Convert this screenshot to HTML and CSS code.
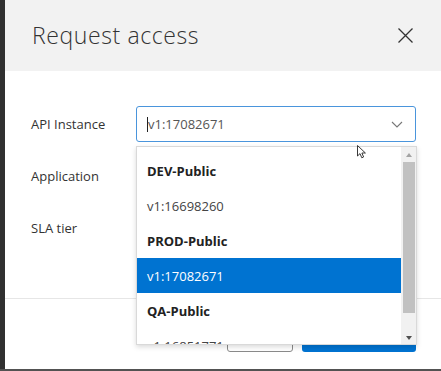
FILE: index.html
```html
<!DOCTYPE html>
<html lang="en">
<head>
<meta charset="utf-8">
<title>Request access</title>
<link rel="stylesheet" href="styles.css">
</head>
<body>
<div class="screen">
  <div class="dialog">
    <header class="dlg-head">
      <h1 class="dlg-title">Request access</h1>
      <button class="close" aria-label="Close">
        <svg width="15" height="15" viewBox="0 0 15 15"><path d="M0.5 0.5 L14.5 14.5 M14.5 0.5 L0.5 14.5" stroke="#333" stroke-width="1.3" fill="none"/></svg>
      </button>
    </header>
    <div class="dlg-body">
      <div class="row">
        <label class="label">API Instance</label>
        <div class="field-wrap">
          <div class="field select focused">
            <span class="text-cursor"></span>
            <span class="value">v1:17082671</span>
            <svg class="chevron" width="12" height="7" viewBox="0 0 12 7"><path d="M1 1 L6 6 L11 1" stroke="#777" stroke-width="1.1" fill="none"/></svg>
          </div>
          <div class="dropdown">
            <ul class="options">
              <li class="group">DEV-Public</li>
              <li class="opt">v1:16698260</li>
              <li class="group">PROD-Public</li>
              <li class="opt selected">v1:17082671</li>
              <li class="group">QA-Public</li>
              <li class="opt">v1:16851771</li>
            </ul>
            <div class="scrollbar">
              <span class="arrow up"></span>
              <span class="thumb"></span>
              <span class="arrow down"></span>
            </div>
          </div>
        </div>
      </div>
      <div class="row">
        <label class="label">Application</label>
        <div class="field-wrap"><div class="field select"></div></div>
      </div>
      <div class="row">
        <label class="label">SLA tier</label>
        <div class="field-wrap"><div class="field select"></div></div>
      </div>
    </div>
    <footer class="dlg-foot">
      <button class="btn btn-cancel">Cancel</button>
      <button class="btn btn-primary">Request access</button>
    </footer>
    <svg class="mouse" width="10" height="14" viewBox="0 0 10 14"><path d="M0.5 0.5 L0.5 11 L3 8.6 L4.8 12.8 L6.6 12 L4.9 8 L8.4 8 Z" fill="#fff" stroke="#222" stroke-width="0.9" stroke-linejoin="round"/></svg>
  </div>
</div>
</body>
</html>
```

FILE: styles.css
```css
html, body {
  margin: 0;
  padding: 0;
}

body {
  font-family: "Open Sans", "Noto Sans", sans-serif;
  background: #303030;
}

.screen {
  width: 441px;
  height: 371px;
  box-sizing: border-box;
  padding-left: 5px;
  background: #303030;
  border-bottom: 2px solid #525252;
  display: flex;
  overflow: hidden;
}

.dialog {
  position: relative;
  flex: 1;
  background: #fff;
  display: flex;
  flex-direction: column;
}

.dlg-head {
  height: 71px;
  background: #f2f2f2;
  display: flex;
  align-items: center;
  justify-content: space-between;
  padding: 0 28px 0 27px;
  flex: none;
}

.dlg-title {
  margin: 0;
  font-family: "Open Sans", sans-serif;
  font-weight: 300;
  font-size: 23px;
  color: #333;
  letter-spacing: 0.6px;
  line-height: 1;
}

.close {
  border: 0;
  background: none;
  padding: 0;
  width: 15px;
  height: 16px;
  display: flex;
  align-items: center;
}

.dlg-body {
  padding: 35px 25px 52px 26px;
  display: flex;
  flex-direction: column;
  gap: 16px;
  border-bottom: 1px solid #e6e6e6;
}

.row {
  display: flex;
  align-items: center;
}

.label {
  width: 105px;
  font-size: 13px;
  color: #333;
}

.field-wrap {
  position: relative;
  flex: 1;
}

.field {
  height: 36px;
  box-sizing: border-box;
  border: 1px solid #c8c8c8;
  border-radius: 3px;
  background: #fff;
}

.select {
  display: flex;
  align-items: center;
  padding: 0 12px 0 10px;
}

.focused {
  border-color: #4a95dc;
}

.text-cursor {
  width: 1px;
  height: 15px;
  background: #222;
}

.value {
  flex: 1;
  font-size: 13px;
  color: #555;
}

.chevron {
  display: block;
}

.dropdown {
  position: absolute;
  z-index: 5;
  top: 40px;
  left: 0;
  right: -1px;
  height: 199px;
  box-sizing: border-box;
  border: 1px solid #d9d9d9;
  background: #fff;
  box-shadow: 0 2px 5px rgba(0, 0, 0, 0.15);
  display: flex;
  overflow: hidden;
}

.options {
  list-style: none;
  margin: 0;
  padding: 6px 0 0;
  flex: 1;
}

.options li {
  height: 35px;
  display: flex;
  align-items: center;
  padding-left: 10px;
  font-size: 13px;
  color: #333;
}

.options .group {
  font-weight: 700;
  color: #222;
}

.options .opt {
  color: #444;
}

.options .selected {
  background: #0073d1;
  color: #fff;
}

.scrollbar {
  width: 15px;
  background: #f1f1f1;
  display: flex;
  flex-direction: column;
  align-items: center;
  flex: none;
}

.arrow {
  width: 0;
  height: 0;
  border-left: 3.5px solid transparent;
  border-right: 3.5px solid transparent;
  flex: none;
}

.arrow.up {
  margin-top: 6px;
  border-bottom: 4px solid #a3a3a3;
}

.arrow.down {
  margin-top: 23px;
  border-top: 4px solid #505050;
}

.thumb {
  width: 12px;
  height: 151px;
  margin-top: 5px;
  background: #c1c1c1;
  flex: none;
}

.dlg-foot {
  display: flex;
  justify-content: flex-end;
  gap: 9px;
  padding: 19px 25px 0 0;
}

.btn {
  height: 34px;
  border-radius: 3px;
  font-family: "Open Sans", sans-serif;
  font-size: 13px;
  box-sizing: border-box;
}

.btn-cancel {
  width: 66px;
  border: 1px solid #8a8a8a;
  background: #fff;
  color: #333;
}

.btn-primary {
  width: 114px;
  border: 0;
  background: #0073d1;
  color: #fff;
}

.mouse {
  position: absolute;
  left: 352px;
  top: 145px;
  z-index: 10;
}
```
